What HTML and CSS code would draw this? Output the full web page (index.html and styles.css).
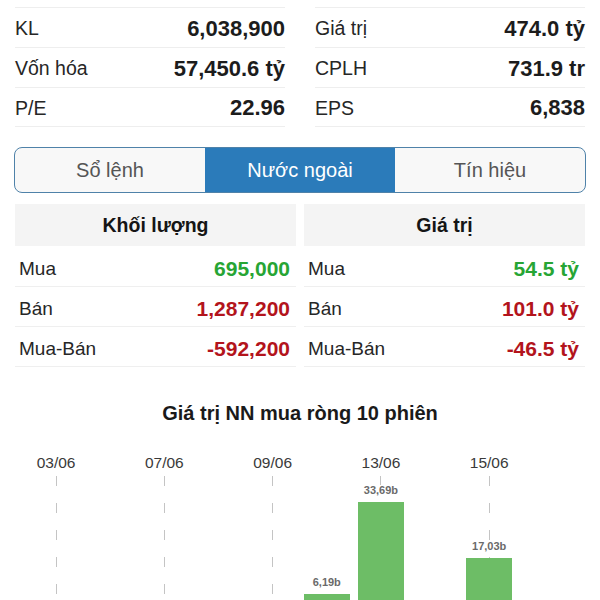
FILE: index.html
```html
<!DOCTYPE html>
<html lang="vi">
<head>
<meta charset="utf-8">
<title>Nước ngoài</title>
<link rel="stylesheet" href="styles.css">
</head>
<body>
<div class="page">
  <section class="stats">
    <div class="stat-col">
      <div class="stat-row"><span class="stat-label">KL</span><span class="stat-value">6,038,900</span></div>
      <div class="stat-row"><span class="stat-label">Vốn hóa</span><span class="stat-value">57,450.6 tỷ</span></div>
      <div class="stat-row"><span class="stat-label">P/E</span><span class="stat-value">22.96</span></div>
    </div>
    <div class="stat-col">
      <div class="stat-row"><span class="stat-label">Giá trị</span><span class="stat-value">474.0 tỷ</span></div>
      <div class="stat-row"><span class="stat-label">CPLH</span><span class="stat-value">731.9 tr</span></div>
      <div class="stat-row"><span class="stat-label">EPS</span><span class="stat-value">6,838</span></div>
    </div>
  </section>

  <nav class="tabs">
    <div class="tab">Sổ lệnh</div>
    <div class="tab tab-active">Nước ngoài</div>
    <div class="tab">Tín hiệu</div>
  </nav>

  <section class="foreign">
    <div class="f-col">
      <div class="f-head">Khối lượng</div>
      <div class="f-row"><span class="f-label">Mua</span><span class="f-value up">695,000</span></div>
      <div class="f-row"><span class="f-label">Bán</span><span class="f-value down">1,287,200</span></div>
      <div class="f-row"><span class="f-label">Mua-Bán</span><span class="f-value down">-592,200</span></div>
    </div>
    <div class="f-col">
      <div class="f-head">Giá trị</div>
      <div class="f-row"><span class="f-label">Mua</span><span class="f-value up">54.5 tỷ</span></div>
      <div class="f-row"><span class="f-label">Bán</span><span class="f-value down">101.0 tỷ</span></div>
      <div class="f-row"><span class="f-label">Mua-Bán</span><span class="f-value down">-46.5 tỷ</span></div>
    </div>
  </section>

  <section class="chart">
    <h2 class="chart-title">Giá trị NN mua ròng 10 phiên</h2>
    <div class="chart-grid">
      <div class="session"><div class="date">03/06</div><div class="plot dashed"></div></div>
      <div class="session"><div class="date"></div><div class="plot"></div></div>
      <div class="session"><div class="date">07/06</div><div class="plot dashed"></div></div>
      <div class="session"><div class="date"></div><div class="plot"></div></div>
      <div class="session"><div class="date">09/06</div><div class="plot dashed"></div></div>
      <div class="session"><div class="date"></div><div class="plot">
        <span class="bar-label">6,19b</span><div class="bar" style="height:20.8px"></div>
      </div></div>
      <div class="session"><div class="date">13/06</div><div class="plot dashed">
        <span class="bar-label">33,69b</span><div class="bar" style="height:113.2px"></div>
      </div></div>
      <div class="session"><div class="date"></div><div class="plot"></div></div>
      <div class="session"><div class="date">15/06</div><div class="plot dashed">
        <span class="bar-label">17,03b</span><div class="bar" style="height:57.2px"></div>
      </div></div>
      <div class="session"><div class="date"></div><div class="plot"></div></div>
    </div>
  </section>
</div>
</body>
</html>
```
FILE: styles.css
```css
html, body {
  margin: 0;
  padding: 0;
  background: #ffffff;
  overflow: hidden;
}

body {
  font-family: "Liberation Sans", Arial, "Noto Sans", sans-serif;
  color: #222;
}

.page {
  padding: 7px 15px 0;
}

/* top stats */
.stats {
  display: grid;
  grid-template-columns: 1fr 1fr;
  column-gap: 30px;
}

.stat-row {
  display: flex;
  justify-content: space-between;
  align-items: center;
  height: 40px;
  box-sizing: border-box;
  border-top: 1px solid #eeeeee;
  padding-top: 2px;
}

.stat-row:last-child {
  border-bottom: 1px solid #eeeeee;
}

.stat-label {
  font-size: 19.5px;
  color: #262626;
}

.stat-value {
  font-size: 22px;
  font-weight: bold;
  color: #1c1c1c;
}

/* tabs */
.tabs {
  display: flex;
  margin: 20px -1px 0;
  height: 46px;
  box-sizing: border-box;
  border: 1.5px solid #4f82a9;
  border-radius: 8px;
  overflow: hidden;
  background: #f8f8f8;
}

.tab {
  flex: 1;
  display: flex;
  align-items: center;
  justify-content: center;
  font-size: 20px;
  color: #555;
}

.tab-active {
  background: #2b7bba;
  color: #ffffff;
}

/* foreign trade table */
.foreign {
  display: grid;
  grid-template-columns: 1fr 1fr;
  column-gap: 8px;
  margin-top: 11px;
}

.f-head {
  height: 42px;
  display: flex;
  align-items: center;
  justify-content: center;
  background: #f4f4f4;
  font-size: 19.5px;
  font-weight: bold;
  color: #151515;
  margin-bottom: 1px;
}

.f-row {
  display: flex;
  justify-content: space-between;
  align-items: center;
  height: 40px;
  box-sizing: border-box;
  border-bottom: 1px solid #efefef;
  padding: 4px 6px 0 4px;
}

.f-label {
  font-size: 19px;
  color: #262626;
}

.f-value {
  font-size: 21px;
  font-weight: bold;
}

.up {
  color: #27a534;
}

.down {
  color: #b3141c;
}

/* chart */
.chart-title {
  margin: 34px 0 0;
  text-align: center;
  font-size: 20px;
  line-height: 24px;
  font-weight: bold;
  color: #1a1a1a;
}

.chart-grid {
  display: grid;
  grid-template-columns: repeat(10, 54.15px);
  margin: 28px 0 0 14px;
}

.session {
  display: flex;
  flex-direction: column;
  align-items: center;
}

.date {
  height: 20px;
  line-height: 20px;
  font-size: 15.5px;
  color: #3a3a3a;
  margin-bottom: 3px;
  white-space: nowrap;
}

.plot {
  height: 139px;
  width: 100%;
  display: flex;
  flex-direction: column;
  align-items: center;
  justify-content: flex-end;
}

.dashed {
  background-image: repeating-linear-gradient(to bottom, #c4c4c4 0, #c4c4c4 10px, transparent 10px, transparent 27px);
  background-size: 1px 100%;
  background-position: center top;
  background-repeat: no-repeat;
}

.bar-label {
  font-size: 11px;
  line-height: 11px;
  font-weight: bold;
  color: #6a6a6a;
  margin-bottom: 6px;
  background: #ffffff;
  padding: 0 1px;
}

.bar {
  width: 46px;
  background: #6dbd66;
}
```
